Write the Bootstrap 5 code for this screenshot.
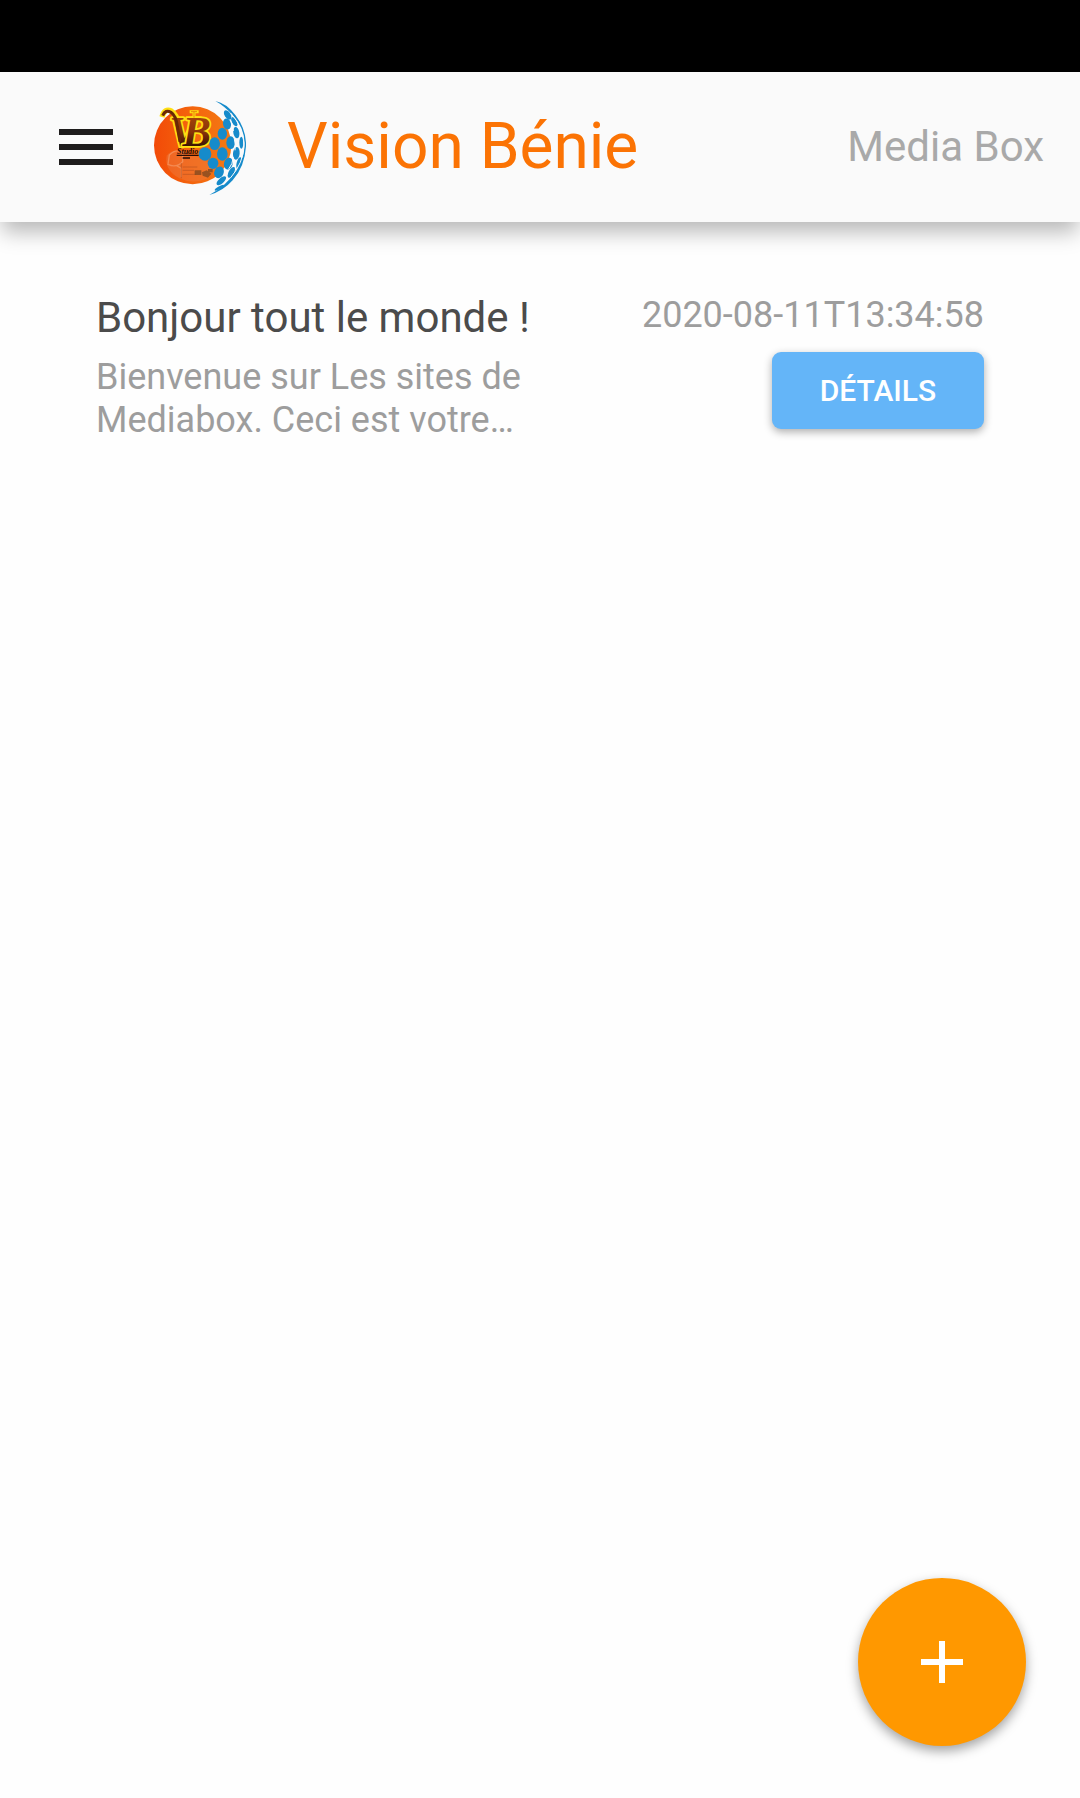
<!DOCTYPE html>
<html lang="fr">
<head>
<meta charset="utf-8">
<meta name="viewport" content="width=device-width, initial-scale=1">
<title>Vision Bénie</title>
<link href="https://cdn.jsdelivr.net/npm/bootstrap@5.3.0/dist/css/bootstrap.min.css" rel="stylesheet">
<style>
  body { font-family: Roboto, "Noto Sans", sans-serif; background: #fefefe; }
  .status-strip { height: 72px; background: #000; }
  .app-bar { min-height: 150px; padding: 0 36px 0 50px; background: #fafafa; box-shadow: 0 12px 20px -2px rgba(0, 0, 0, .28); }
  .menu-btn { width: 72px; height: 72px; color: #1e1c1c; }
  .app-logo { width: 92px; height: 94px; margin: 2px 0 0 32px; }
  .app-title { margin-left: 41px; font-size: 64px; line-height: 76px; color: #fb7304; }
  .app-side { font-size: 42px; line-height: 48px; color: #a9a9a9; }
  .post-item { padding: 72px 96px 0; }
  .post-title { font-size: 42px; line-height: 48px; color: #4b4b4b; }
  .post-text { margin-top: 14px; max-width: 480px; font-size: 36px; line-height: 43px; color: #9d9d9d; }
  .post-date { font-size: 36px; line-height: 43px; color: #9d9d9d; }
  .details-btn { margin-top: 15px; width: 212px; height: 77px; font-size: 30px; font-weight: 500; color: #fff; background: #64b5f8; border-radius: 9px; box-shadow: 0 3px 8px rgba(0, 0, 0, .32); }
  .add-btn { right: 54px; bottom: 52px; width: 168px; height: 168px; color: #fff; background: #ff9800; box-shadow: 0 5px 12px rgba(0, 0, 0, .36); }
</style>
<script src="https://cdn.jsdelivr.net/npm/bootstrap@5.3.0/dist/js/bootstrap.bundle.min.js"></script>
</head>
<body class="min-vh-100">
<div class="status-strip"></div>
<header class="app-bar d-flex align-items-center">
  <button type="button" class="menu-btn btn border-0 p-0 d-flex" aria-label="Menu">
    <svg width="72" height="72" viewBox="0 0 24 24" fill="currentColor" aria-hidden="true"><path d="M3 6h18v2H3zM3 11h18v2H3zM3 16h18v2H3z"/></svg>
  </button>
  <svg class="app-logo flex-shrink-0" viewBox="26 28 276 282" role="img" aria-label="VB Studio">
    <defs>
      <linearGradient id="disc" x1="0" y1="0" x2="1" y2="0"><stop offset="0" stop-color="#f24a08"/><stop offset=".5" stop-color="#f4650d"/><stop offset="1" stop-color="#f47a14"/></linearGradient>
      <linearGradient id="letters" x1="0" y1="0" x2="0" y2="1"><stop offset="0" stop-color="#b04c0a"/><stop offset=".5" stop-color="#8a3408"/><stop offset=".8" stop-color="#3a1204"/><stop offset="1" stop-color="#160400"/></linearGradient>
    </defs>
    <ellipse cx="142" cy="161" rx="116" ry="117" fill="url(#disc)"/>
    <path d="M64 192q14-20 50-14l50 20 46 26-20 34q-46 22-88 2-46-26-38-68z" fill="#ee7c42" opacity=".45"/>
    <path d="M72 190q20-20 40-8v28q-20 20-44 8zM94 222l14 8v26" fill="none" stroke="#f7a070" stroke-width="4" opacity=".6"/>
    <path d="M108 214v46M112 226h44M112 236h34M112 248h40" fill="none" stroke="#b5511f" stroke-width="3" opacity=".6"/>
    <path d="M148 236h20v14h-20zM170 242l14-6 14 10-10 12-16-6zM188 232h14v10h-14z" fill="#7b471f" opacity=".75"/>
    <path d="M50 76Q58 48 78 58q18 10 22 44l4 50" fill="none" stroke="#ffdf12" stroke-width="16"/>
    <path d="M133 60h27M146 60v20" stroke="#ffdf12" stroke-width="9"/>
    <text x="72" y="164" font-family="Liberation Serif, serif" font-style="italic" font-weight="700" font-size="128" fill="url(#letters)" stroke="#ffdf12" stroke-width="11" stroke-linejoin="round" paint-order="stroke">V<tspan dx="-46">B</tspan></text>
    <path d="M52 72Q60 52 77 62q15 10 19 42l8 46" fill="none" stroke="#6a2806" stroke-width="9"/>
    <path d="M137 60h18M146 60v18" stroke="#e78a0a" stroke-width="3"/>
    <text x="95" y="187" font-family="Liberation Serif, serif" font-style="italic" font-weight="700" font-size="24" fill="#1c0a04">Studio</text>
    <path d="M94 191h66M112 199h22" stroke="#2a0d04" stroke-width="4"/>
    <g fill="#168bcb">
      <path d="M210 28q32 6 60 42 34 44 32 94-4 62-40 102-28 32-70 44 50-26 76-68 30-40 30-88-2-48-36-84-26-28-52-42z"/>
      <ellipse cx="179" cy="187" rx="19" ry="20"/>
      <ellipse cx="208" cy="156" rx="16" ry="19"/>
      <ellipse cx="231" cy="126" rx="14" ry="18"/>
      <ellipse cx="245" cy="97" rx="12" ry="17" transform="rotate(-12 245 97)"/>
      <ellipse cx="247" cy="70" rx="9" ry="16" transform="rotate(-32 247 70)"/>
      <ellipse cx="231" cy="187" rx="16" ry="20"/>
      <ellipse cx="256" cy="153" rx="13" ry="19"/>
      <ellipse cx="273" cy="123" rx="9" ry="17" transform="rotate(-10 273 123)"/>
      <ellipse cx="267" cy="90" rx="7" ry="15" transform="rotate(-26 267 90)"/>
      <ellipse cx="203" cy="215" rx="16" ry="17"/>
      <ellipse cx="249" cy="216" rx="13" ry="18" transform="rotate(14 249 216)"/>
      <ellipse cx="273" cy="185" rx="10" ry="19" transform="rotate(6 273 185)"/>
      <ellipse cx="288" cy="153" rx="6" ry="18"/>
      <ellipse cx="221" cy="242" rx="14" ry="18" transform="rotate(24 221 242)"/>
      <ellipse cx="258" cy="242" rx="8" ry="18" transform="rotate(28 258 242)"/>
      <ellipse cx="281" cy="214" rx="7" ry="18" transform="rotate(15 281 214)"/>
      <ellipse cx="228" cy="267" rx="8" ry="18" transform="rotate(48 228 267)"/>
      <ellipse cx="222" cy="288" rx="4" ry="16" transform="rotate(60 222 288)"/>
    </g>
    <path d="M256 64q40 46 40 98-2 52-40 96" fill="none" stroke="#fafafa" stroke-width="3"/>
    <path d="M254 84q12 20 10 34M266 136q6 24 3 40M264 196q-2 22-14 36" fill="none" stroke="#fafafa" stroke-width="3"/>
  </svg>
  <h1 class="app-title mb-0 fw-normal text-nowrap">Vision Bénie</h1>
  <span class="app-side ms-auto text-nowrap">Media Box</span>
</header>
<main>
  <article class="post-item d-flex justify-content-between gap-4">
    <div>
      <h2 class="post-title mb-0 fw-normal">Bonjour tout le monde !</h2>
      <p class="post-text mb-0">Bienvenue sur Les sites de Mediabox. Ceci est votre…</p>
    </div>
    <div class="d-flex flex-column align-items-end">
      <time class="post-date text-nowrap" datetime="2020-08-11T13:34:58">2020-08-11T13:34:58</time>
      <button type="button" class="details-btn btn border-0 p-0">DÉTAILS</button>
    </div>
  </article>
</main>
<button type="button" class="add-btn btn border-0 rounded-circle p-0 position-fixed d-flex align-items-center justify-content-center" aria-label="Ajouter">
  <svg width="72" height="72" viewBox="0 0 24 24" fill="currentColor" aria-hidden="true"><path d="M19 13h-6v6h-2v-6H5v-2h6V5h2v6h6z"/></svg>
</button>
</body>
</html>
